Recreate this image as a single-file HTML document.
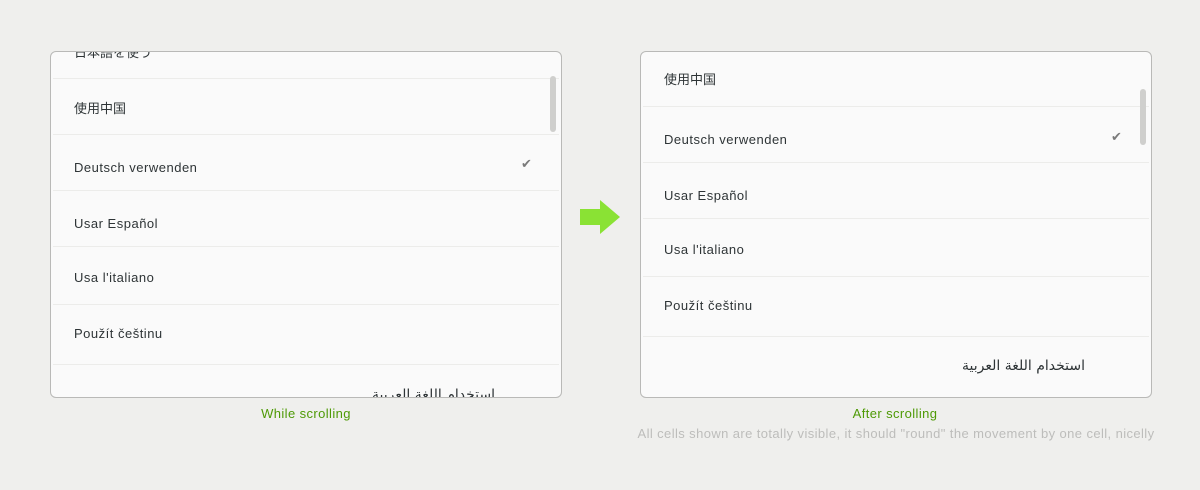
<!DOCTYPE html>
<html><head><meta charset="utf-8"><style>
body{margin:0;width:1200px;height:490px;background:#efefed;position:relative;overflow:hidden;font-family:"Liberation Sans","DejaVu Sans","Noto Sans CJK SC",sans-serif;}
.panel{position:absolute;top:51px;width:510px;height:345px;background:#fafafa;border:1px solid #b9b9b7;border-radius:6px;overflow:hidden;}
.sep{position:absolute;left:2px;right:2px;height:1px;background:#ececea;}
.t{position:absolute;left:23px;font-size:13px;letter-spacing:0.5px;color:#2e3436;line-height:16px;transform:translateY(-8px);white-space:nowrap;}
.ar{left:auto;font-family:"DejaVu Sans",sans-serif;font-size:14px;letter-spacing:0;}
.chk{position:absolute;font-size:13px;font-weight:bold;color:#7a7a7a;transform:translateY(-8px);}
.sb{position:absolute;width:6px;background:#cfcfcd;border-radius:3px;}
.cap{position:absolute;font-size:13px;color:#4e9a06;text-align:center;width:300px;letter-spacing:0.4px;}
</style></head><body>
<div class="panel" style="left:50px">
  <div class="t" style="top:0px;font-family:'Noto Sans CJK JP',sans-serif;letter-spacing:0">日本語を使う</div>
  <div class="sep" style="top:26px"></div>
  <div class="t" style="top:56px;font-family:'Noto Sans CJK SC',sans-serif;letter-spacing:0">使用中国</div>
  <div class="sep" style="top:82px"></div>
  <div class="t" style="top:116px">Deutsch verwenden</div>
  <div class="chk" style="left:470px;top:112px">✔</div>
  <div class="sep" style="top:138px"></div>
  <div class="t" style="top:172px">Usar Español</div>
  <div class="sep" style="top:194px"></div>
  <div class="t" style="top:226px">Usa l'italiano</div>
  <div class="sep" style="top:252px"></div>
  <div class="t" style="top:282px">Použít češtinu</div>
  <div class="sep" style="top:312px"></div>
  <div class="t ar" dir="rtl" style="right:66px;top:343px">استخدام اللغة العربية</div>
  <div class="sb" style="left:499px;top:24px;height:56px"></div>
</div>
<svg style="position:absolute;left:580px;top:200px" width="40" height="34"><path d="M0 9H20V0L40 17L20 34V25H0Z" fill="#8ae234"/></svg>
<div class="panel" style="left:640px">
  <div class="t" style="top:27px;font-family:'Noto Sans CJK SC',sans-serif;letter-spacing:0">使用中国</div>
  <div class="sep" style="top:54px"></div>
  <div class="t" style="top:88px">Deutsch verwenden</div>
  <div class="chk" style="left:470px;top:85px">✔</div>
  <div class="sep" style="top:110px"></div>
  <div class="t" style="top:144px">Usar Español</div>
  <div class="sep" style="top:166px"></div>
  <div class="t" style="top:198px">Usa l'italiano</div>
  <div class="sep" style="top:224px"></div>
  <div class="t" style="top:254px">Použít češtinu</div>
  <div class="sep" style="top:284px"></div>
  <div class="t ar" dir="rtl" style="right:66px;top:314px">استخدام اللغة العربية</div>
  <div class="sb" style="left:499px;top:37px;height:56px"></div>
</div>
<div class="cap" style="left:156px;top:406px">While scrolling</div>
<div class="cap" style="left:745px;top:406px">After scrolling</div>
<div class="cap" style="left:546px;top:426px;width:700px;color:#bdbdbb">All cells shown are totally visible, it should "round" the movement by one cell, nicelly</div>
</body></html>
